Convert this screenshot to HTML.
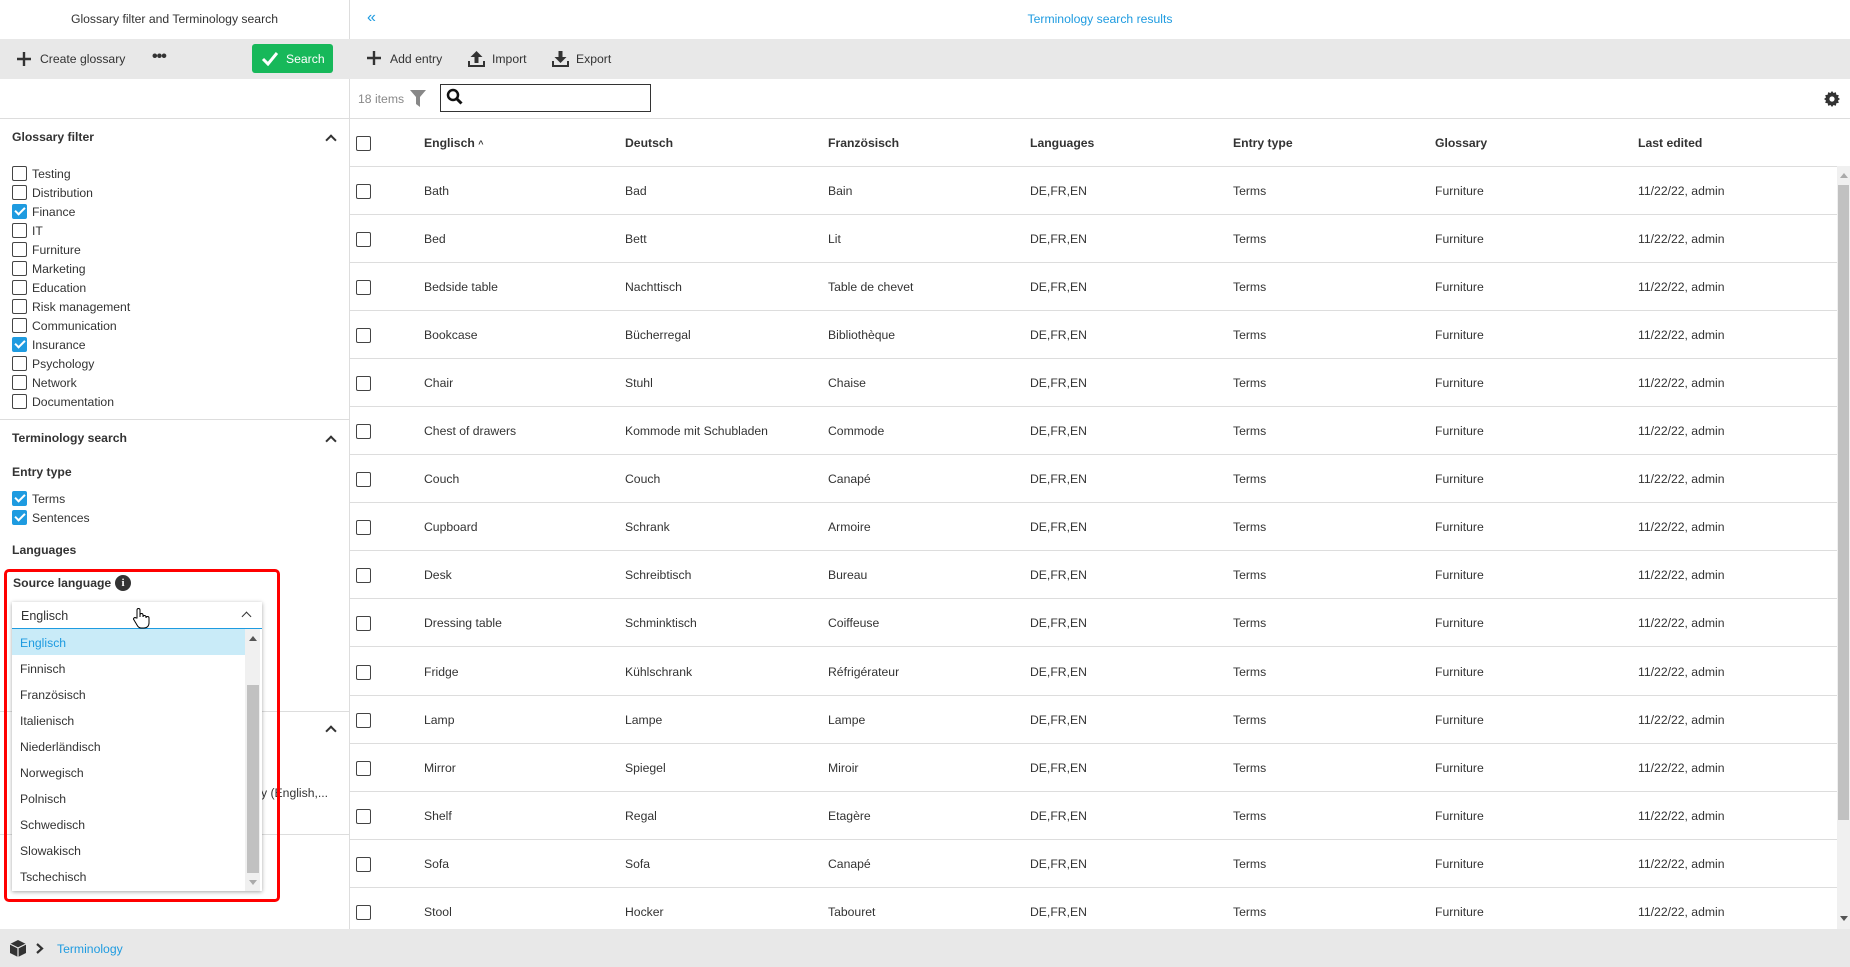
<!DOCTYPE html>
<html><head><meta charset="utf-8"><style>
*{box-sizing:border-box;margin:0;padding:0}
body{width:1850px;height:967px;overflow:hidden;font-family:"Liberation Sans",Arial,sans-serif;font-size:12.2px;color:#333;background:#fff;position:relative}
.a{position:absolute;white-space:nowrap}
.cb{position:absolute;width:15px;height:15px;border:1.3px solid #444;border-radius:2px;background:#fff}
.cb.on{background:#1e9be0;border-color:#1e9be0}
.cb.on:after{content:"";position:absolute;left:4px;top:0px;width:4px;height:8px;border:solid #fff;border-width:0 2px 2px 0;transform:rotate(45deg)}
.b{font-weight:bold}
.hl{position:absolute;height:1px;background:#ddd}
.chev{position:absolute;width:8px;height:8px;border-left:2px solid #333;border-top:2px solid #333;transform:rotate(45deg)}
</style></head><body>
<div class="a" style="left:0;top:12px;width:349px;text-align:center">Glossary filter and Terminology search</div>
<div class="a" style="left:349px;top:0;width:1px;height:929px;background:#ddd"></div>
<div class="a" style="left:0;top:39px;width:1850px;height:40px;background:#e8e8e8"></div>
<svg class="a" style="left:17px;top:52px" width="14" height="14"><path d="M7 0v14M0 7h14" stroke="#333" stroke-width="2.4"/></svg>
<div class="a" style="left:40px;top:52px">Create glossary</div>
<div class="a" style="left:152px;top:48px;font-size:16px;font-weight:bold;letter-spacing:-1px">•••</div>
<div class="a" style="left:252px;top:44px;width:81px;height:29px;background:#17b85a;border-radius:3px"></div>
<svg class="a" style="left:261px;top:51px" width="17" height="15"><path d="M2 8l5 5 9-11" stroke="#fff" stroke-width="3" fill="none"/></svg>
<div class="a" style="left:286px;top:52px;color:#fff">Search</div>
<div class="hl" style="left:0;top:118px;width:1850px"></div>

<div class="a b" style="left:12px;top:130px">Glossary filter</div>
<div class="chev" style="left:327px;top:136px"></div>
<div class="cb" style="left:12px;top:166px"></div><div class="a" style="left:32px;top:167px">Testing</div>
<div class="cb" style="left:12px;top:185px"></div><div class="a" style="left:32px;top:186px">Distribution</div>
<div class="cb on" style="left:12px;top:204px"></div><div class="a" style="left:32px;top:205px">Finance</div>
<div class="cb" style="left:12px;top:223px"></div><div class="a" style="left:32px;top:224px">IT</div>
<div class="cb" style="left:12px;top:242px"></div><div class="a" style="left:32px;top:243px">Furniture</div>
<div class="cb" style="left:12px;top:261px"></div><div class="a" style="left:32px;top:262px">Marketing</div>
<div class="cb" style="left:12px;top:280px"></div><div class="a" style="left:32px;top:281px">Education</div>
<div class="cb" style="left:12px;top:299px"></div><div class="a" style="left:32px;top:300px">Risk management</div>
<div class="cb" style="left:12px;top:318px"></div><div class="a" style="left:32px;top:319px">Communication</div>
<div class="cb on" style="left:12px;top:337px"></div><div class="a" style="left:32px;top:338px">Insurance</div>
<div class="cb" style="left:12px;top:356px"></div><div class="a" style="left:32px;top:357px">Psychology</div>
<div class="cb" style="left:12px;top:375px"></div><div class="a" style="left:32px;top:376px">Network</div>
<div class="cb" style="left:12px;top:394px"></div><div class="a" style="left:32px;top:395px">Documentation</div>
<div class="hl" style="left:0;top:419px;width:349px"></div>
<div class="a b" style="left:12px;top:431px">Terminology search</div>
<div class="chev" style="left:327px;top:437px"></div>
<div class="a b" style="left:12px;top:465px">Entry type</div>
<div class="cb on" style="left:12px;top:491px"></div><div class="a" style="left:32px;top:492px">Terms</div>
<div class="cb on" style="left:12px;top:510px"></div><div class="a" style="left:32px;top:511px">Sentences</div>
<div class="a b" style="left:12px;top:543px">Languages</div>
<div class="hl" style="left:0;top:711px;width:349px"></div>
<div class="chev" style="left:327px;top:727px"></div>
<div class="a" style="left:261px;top:786px">y (English,...</div>
<div class="hl" style="left:0;top:834px;width:349px"></div>

<div class="a" style="left:4px;top:569px;width:276px;height:333px;border:3.5px solid #f00;border-radius:5px"></div>
<div class="a b" style="left:13px;top:576px">Source language</div>
<div class="a" style="left:115px;top:575px;width:16px;height:16px;border-radius:50%;background:#333;color:#fff;font-size:11px;font-weight:bold;text-align:center;line-height:16px;font-family:'Liberation Serif',serif">i</div>
<div class="a" style="left:12px;top:602px;width:250px;height:289px;background:#fff;box-shadow:0 1px 4px rgba(0,0,0,.35)"></div>
<div class="a" style="left:12px;top:628px;width:250px;height:1px;background:#1e9be0"></div>
<div class="a" style="left:21px;top:609px;font-size:12.5px">Englisch</div>
<div class="chev" style="left:243px;top:613px;width:7px;height:7px;border-width:1.5px"></div>
<div class="a" style="left:12px;top:629px;width:233px;height:26px;background:#c9ebf8"></div>
<div class="a" style="left:245px;top:629px;width:15px;height:262px;background:#f0f0f0"></div>
<div class="a" style="left:247px;top:685px;width:12px;height:188px;background:#c1c1c1"></div>
<div class="a" style="left:249px;top:636px;width:0;height:0;border:4px solid transparent;border-bottom:5px solid #555;border-top:0"></div>
<div class="a" style="left:249px;top:880px;width:0;height:0;border:4px solid transparent;border-top:5px solid #aaa;border-bottom:0"></div>
<div class="a" style="left:20px;top:636px;color:#1e9be0">Englisch</div>
<div class="a" style="left:20px;top:662px">Finnisch</div>
<div class="a" style="left:20px;top:688px">Französisch</div>
<div class="a" style="left:20px;top:714px">Italienisch</div>
<div class="a" style="left:20px;top:740px">Niederländisch</div>
<div class="a" style="left:20px;top:766px">Norwegisch</div>
<div class="a" style="left:20px;top:792px">Polnisch</div>
<div class="a" style="left:20px;top:818px">Schwedisch</div>
<div class="a" style="left:20px;top:844px">Slowakisch</div>
<div class="a" style="left:20px;top:870px">Tschechisch</div>
<svg class="a" style="left:132px;top:607px" width="18" height="22"><path d="M5 11V3a1.5 1.5 0 0 1 3 0v7l0-2a1.5 1.5 0 0 1 3 0v2a1.5 1.5 0 0 1 3 0v1a1.5 1.5 0 0 1 3 0v5c0 3-2 5-5 5H9c-2 0-3-1-4-3L2 13a1.4 1.4 0 0 1 2-2z" fill="#fff" stroke="#000" stroke-width="1"/></svg>

<div class="a" style="left:367px;top:9px;color:#1e9be0;font-size:16px">«</div>
<div class="a" style="left:350px;top:12px;width:1500px;text-align:center;color:#1e9be0">Terminology search results</div>
<svg class="a" style="left:367px;top:51px" width="14" height="14"><path d="M7 0v14M0 7h14" stroke="#333" stroke-width="2.4"/></svg>
<div class="a" style="left:390px;top:52px">Add entry</div>
<svg class="a" style="left:468px;top:50px" width="17" height="17"><path d="M8.5 1l-6 6h4v6h4V7h4z" fill="#333"/><path d="M1 11v5h15v-5" stroke="#333" stroke-width="2" fill="none"/></svg>
<div class="a" style="left:492px;top:52px">Import</div>
<svg class="a" style="left:552px;top:50px" width="17" height="17"><path d="M8.5 13l-6-6h4V1h4v6h4z" fill="#333"/><path d="M1 11v5h15v-5" stroke="#333" stroke-width="2" fill="none"/></svg>
<div class="a" style="left:576px;top:52px">Export</div>
<div class="a" style="left:358px;top:92px;color:#888">18 items</div>
<svg class="a" style="left:410px;top:90px" width="16" height="17"><path d="M0 0h16l-6 7v10l-4-3V7z" fill="#888"/></svg>
<div class="a" style="left:440px;top:84px;width:211px;height:28px;border:1.5px solid #333"></div>
<svg class="a" style="left:446px;top:88px" width="18" height="18"><circle cx="7" cy="7" r="5" stroke="#111" stroke-width="2.5" fill="none"/><path d="M10.5 10.5l5 5" stroke="#111" stroke-width="3"/></svg>
<svg class="a" style="left:1824px;top:91px" width="16" height="16" viewBox="0 0 16 16"><path d="M8 0l1.5 2 2.4-.8.4 2.5 2.5.4L14 6.5 16 8l-2 1.5.8 2.4-2.5.4-.4 2.5L9.5 14 8 16l-1.5-2-2.4.8-.4-2.5-2.5-.4.8-2.4L0 8l2-1.5-.8-2.4 2.5-.4.4-2.5 2.4.8z" fill="#333"/><circle cx="8" cy="8" r="2.6" fill="#fff"/></svg>

<div class="hl" style="left:350px;top:166px;width:1500px"></div>
<div class="cb" style="left:356px;top:136px"></div>
<div class="a b" style="left:424px;top:136px">Englisch <span style="font-size:9px">^</span></div>
<div class="a b" style="left:625px;top:136px">Deutsch</div>
<div class="a b" style="left:828px;top:136px">Französisch</div>
<div class="a b" style="left:1030px;top:136px">Languages</div>
<div class="a b" style="left:1233px;top:136px">Entry type</div>
<div class="a b" style="left:1435px;top:136px">Glossary</div>
<div class="a b" style="left:1638px;top:136px">Last edited</div>
<div class="a" style="left:1837px;top:166px;width:13px;height:763px;background:#f0f0f0"></div>
<div class="a" style="left:1838px;top:185px;width:11px;height:635px;background:#c1c1c1"></div>
<div class="a" style="left:1840px;top:173px;border:4px solid transparent;border-bottom:5px solid #aaa;border-top:0"></div>
<div class="a" style="left:1840px;top:916px;border:4px solid transparent;border-top:5px solid #555;border-bottom:0"></div>
<div id="rows"></div>
<script>
var d=[["Bath","Bad","Bain"],["Bed","Bett","Lit"],["Bedside table","Nachttisch","Table de chevet"],["Bookcase","Bücherregal","Bibliothèque"],["Chair","Stuhl","Chaise"],["Chest of drawers","Kommode mit Schubladen","Commode"],["Couch","Couch","Canapé"],["Cupboard","Schrank","Armoire"],["Desk","Schreibtisch","Bureau"],["Dressing table","Schminktisch","Coiffeuse"],["Fridge","Kühlschrank","Réfrigérateur"],["Lamp","Lampe","Lampe"],["Mirror","Spiegel","Miroir"],["Shelf","Regal","Etagère"],["Sofa","Sofa","Canapé"],["Stool","Hocker","Tabouret"]];
var h="";d.forEach(function(r,i){var y=166+i*48.05;var t=y+17;
h+='<div class="cb" style="left:356px;top:'+(t+1)+'px"></div>';
[[424,r[0]],[625,r[1]],[828,r[2]],[1030,"DE,FR,EN"],[1233,"Terms"],[1435,"Furniture"],[1638,"11/22/22, admin"]].forEach(function(c){h+='<div class="a" style="left:'+c[0]+'px;top:'+(t+1)+'px">'+c[1]+'</div>'});
if(i<15)h+='<div class="hl" style="left:350px;top:'+Math.round(y+48)+'px;width:1487px"></div>';});
document.getElementById("rows").innerHTML=h;
</script>
<div class="a" style="left:0;top:929px;width:1850px;height:38px;background:#e8e8e8"></div>
<svg class="a" style="left:10px;top:940px" width="16" height="17" viewBox="0 0 16 17"><path d="M8 0l8 4v9l-8 4-8-4V4z" fill="#333"/><path d="M0 4l8 4 8-4M8 8v9" stroke="#e8e8e8" stroke-width="1.2" fill="none"/></svg>
<svg class="a" style="left:36px;top:943px" width="8" height="11"><path d="M1 1l5 4.5L1 10" stroke="#333" stroke-width="2.2" fill="none"/></svg>
<div class="a" style="left:57px;top:942px;color:#1e9be0">Terminology</div>
</body></html>
